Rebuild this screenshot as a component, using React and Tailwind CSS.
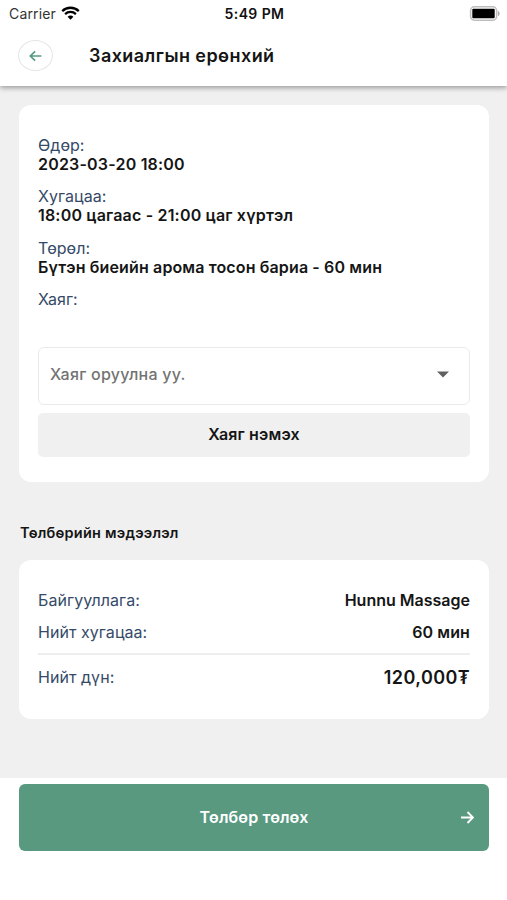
import React from "react";

const details = [
  { label: "Өдөр:", value: "2023-03-20 18:00", track: "tracking-[0.2px]" },
  { label: "Хугацаа:", value: "18:00 цагаас - 21:00 цаг хүртэл", track: "tracking-[0.18px]" },
  { label: "Төрөл:", value: "Бүтэн биеийн арома тосон бариа - 60 мин", track: "tracking-[0.13px]" },
];

function StatusBar() {
  return (
    <div className="grid h-[27px] grid-cols-3 items-center pl-[9px] pr-[7px] text-[#111]">
      <div className="flex items-center gap-[5px]">
        <span className="text-[14px] tracking-[0.15px] text-[#333]">Carrier</span>
        <svg className="-mt-px" width="19" height="14" viewBox="0 0 19 14" fill="none" stroke="#000">
          <path d="M1.2 5.1C5.8.6 13.2.6 17.8 5.1" strokeWidth="2.3" />
          <path d="M4.1 8.1C7.1 5.2 11.9 5.2 14.9 8.1" strokeWidth="2.2" />
          <path d="M9.5 13.7 6.6 10.8C8.2 9.2 10.8 9.2 12.4 10.8Z" fill="#000" stroke="none" />
        </svg>
      </div>
      <span className="text-center text-[14px] font-semibold tracking-[0.4px]">5:49 PM</span>
      <svg className="-mt-px justify-self-end" width="31" height="15" viewBox="0 0 31 15">
        <rect x="1.6" y="0.8" width="26" height="13.4" rx="3.8" fill="#fff" stroke="#bdbdbd" strokeWidth="1.5" />
        <rect x="3.3" y="2.8" width="22.4" height="9.4" rx="1" fill="#000" />
        <path d="M28.9 4.8v5.4c2.3-1 2.3-4.4 0-5.4Z" fill="#aaa" />
      </svg>
    </div>
  );
}

function Row({ label, children }) {
  return (
    <div className="flex h-8 items-center justify-between">
      <span className="tracking-[0.05px] text-[#354a68]">{label}</span>
      {children}
    </div>
  );
}

export default function App() {
  return (
    <div className="flex h-[900px] w-[507px] flex-col overflow-hidden bg-[#f0f0f0] font-['Inter','Noto_Sans',sans-serif] text-[16px] text-[#151515]">
      <header className="z-10 h-[86px] shrink-0 bg-white shadow-[0_2px_5px_rgba(0,0,0,0.35)]">
        <StatusBar />
        <div className="flex h-[57px] items-center pl-[18px]">
          <button className="flex h-[31px] w-[35px] items-center justify-center rounded-[50%] border border-[#e3e5e7] pr-px">
            <svg width="13" height="12" viewBox="0 0 14 12" fill="none" stroke="#58997f" strokeWidth="1.8">
              <path d="M13.3 6H1.5M6.6 1 1.4 6l5.2 5" />
            </svg>
          </button>
          <h1 className="ml-9 text-[18px] font-semibold tracking-[0.44px]">Захиалгын ерөнхий</h1>
        </div>
      </header>

      <main className="flex-1 pl-[19px] pr-[18px] pt-[19px]">
        <section className="h-[377px] rounded-[12px] bg-white px-[19px] pt-[31px]">
          {details.map((d) => (
            <div key={d.label} className="h-[51.3px] leading-[19px]">
              <div className="tracking-[0.05px] text-[#354a68]">{d.label}</div>
              <div className={`whitespace-nowrap font-semibold ${d.track}`}>{d.value}</div>
            </div>
          ))}
          <div className="h-[57px] leading-[19px] tracking-[0.05px] text-[#354a68]">Хаяг:</div>
          <div className="flex h-[58px] items-center justify-between rounded-[6px] border border-[#e8ebec] pl-[11px] pr-5">
            <span className="pb-[3px] font-medium tracking-[0.25px] text-[#737373]">Хаяг оруулна уу.</span>
            <svg className="mb-0.5" width="12" height="7" viewBox="0 0 12 7"><path d="M0 .5h12L6 6.5Z" fill="#606060" /></svg>
          </div>
          <button className="mt-2 flex h-11 w-full items-center justify-center rounded-[5px] bg-[#f0f0f0] pb-0.5 font-semibold tracking-[0.15px]">
            Хаяг нэмэх
          </button>
        </section>

        <h2 className="mt-[41px] pl-px text-[14.5px] font-semibold leading-5 tracking-[0.22px]">Төлбөрийн мэдээлэл</h2>

        <section className="mt-[17px] h-[159px] rounded-[12px] bg-white px-[19px] pt-6">
          <Row label="Байгууллага:">
            <span className="font-semibold">Hunnu Massage</span>
          </Row>
          <Row label="Нийт хугацаа:">
            <span className="font-semibold tracking-[0.1px]">60 мин</span>
          </Row>
          <div className="mb-[6px] mt-[5px] h-[2px] bg-[#eeeeee]" />
          <Row label="Нийт дүн:">
            <span className="text-[18px] font-semibold tracking-[0.4px]">120,000₮</span>
          </Row>
        </section>
      </main>

      <footer className="h-[122px] shrink-0 bg-white pl-[19px] pr-[18px] pt-[6px]">
        <button className="grid h-[67px] w-full grid-cols-[1fr_auto_1fr] items-center rounded-[6px] bg-[#58997f] px-[15px] text-white">
          <span />
          <span className="pb-px font-semibold tracking-[0.12px]">Төлбөр төлөх</span>
          <svg className="justify-self-end" width="13" height="13" viewBox="0 0 13 13" fill="none" stroke="#fff" strokeWidth="1.9">
            <path d="M0 6.5h11.8M6.5 1 12 6.5 6.5 12" />
          </svg>
        </button>
      </footer>
    </div>
  );
}
